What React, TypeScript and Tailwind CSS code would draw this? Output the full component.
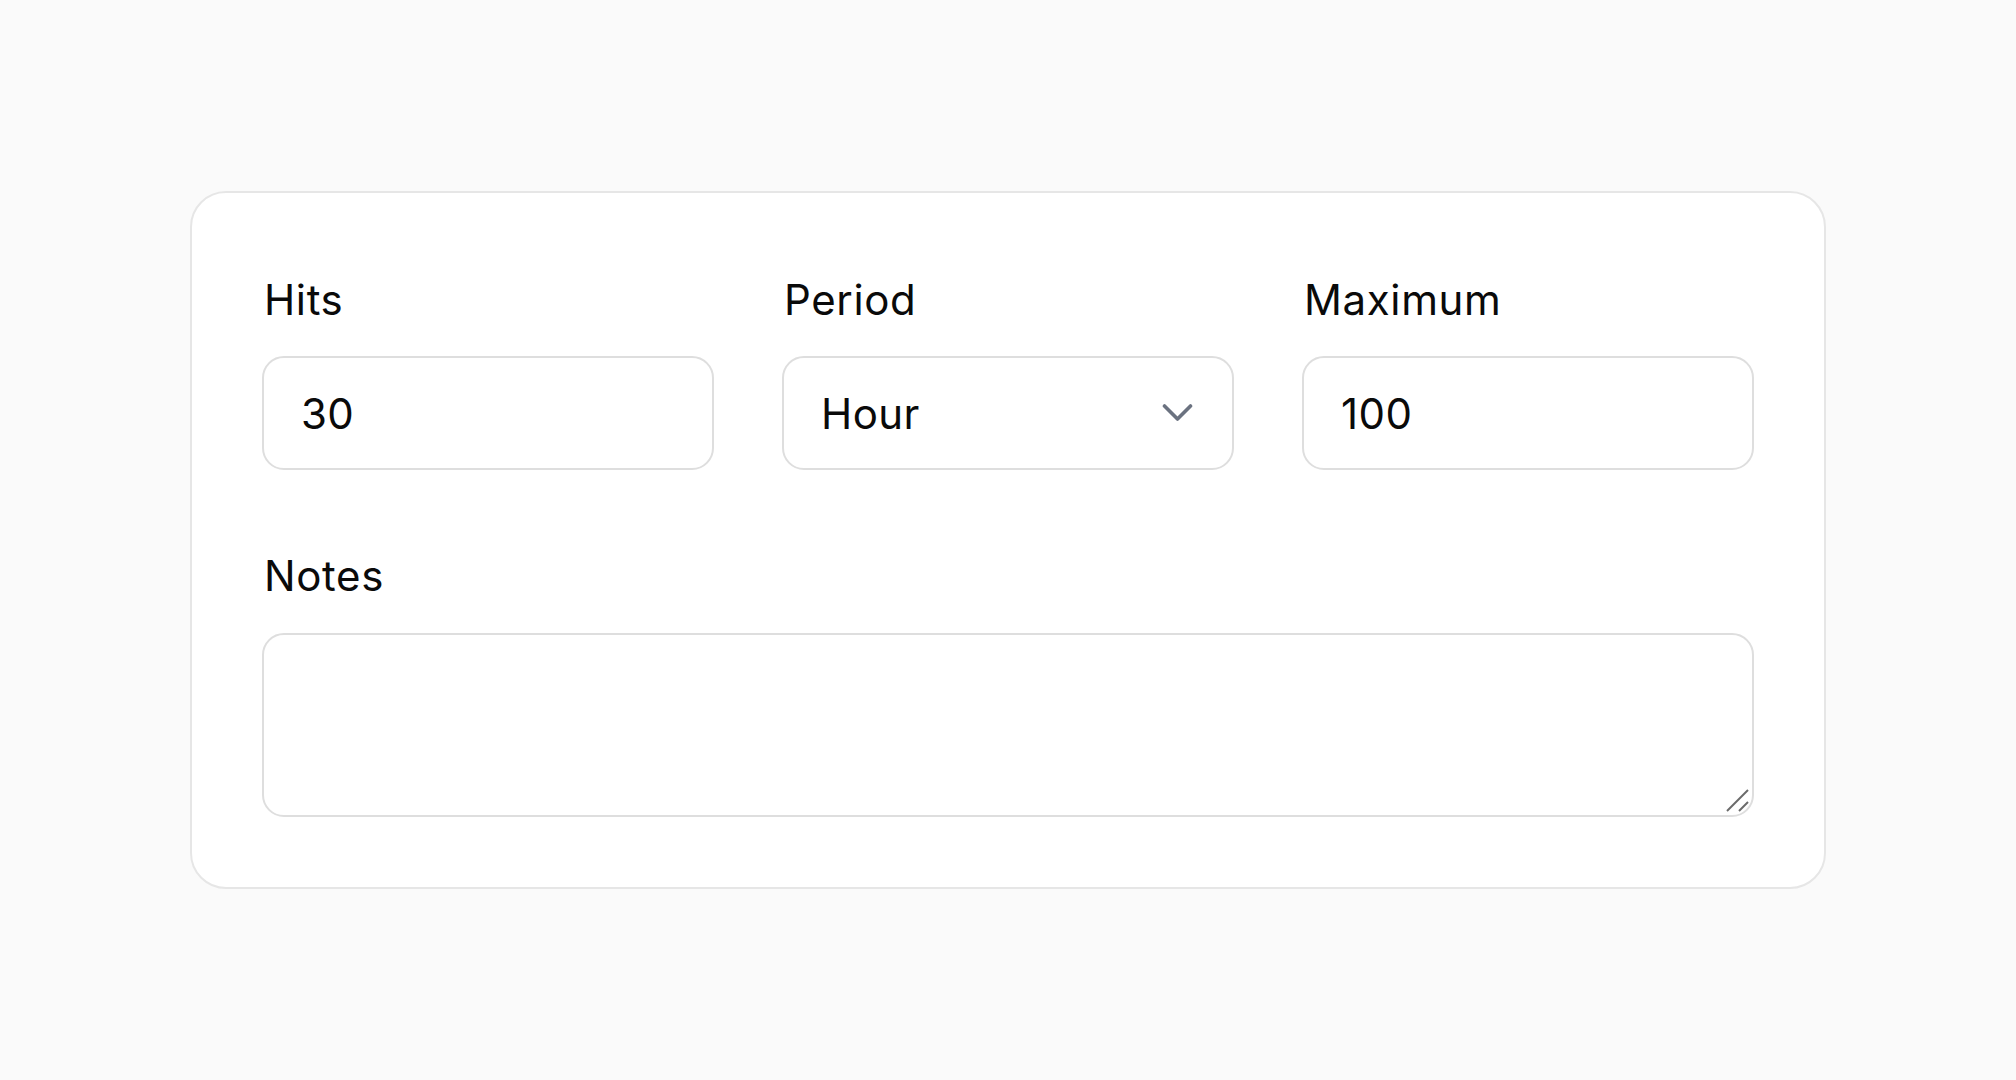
import React, { useState } from 'react';

const font = { fontFamily: 'Inter, "Noto Sans", sans-serif' };

function Label({ children }: { children: React.ReactNode }) {
  return <label className="block text-[42px] leading-[63px] text-[#0a0a0a] tracking-[0.015em] pl-[2px]">{children}</label>;
}

export default function App() {
  const [hits, setHits] = useState('30');
  const [period, setPeriod] = useState('Hour');
  const [max, setMax] = useState('100');
  const [notes, setNotes] = useState('');

  const inputCls =
    'w-full h-[114px] rounded-[22px] border-2 border-[#dedede] bg-white px-[37px] text-[42px] text-[#0a0a0a] tracking-[0.01em] outline-none';

  return (
    <div className="min-h-screen bg-[#fafafa] flex items-center justify-center" style={font}>
      <div className="w-[1636px] bg-white border-2 border-[#e6e6e6] rounded-[36px] px-[70px] pt-[75px] pb-[70px]">
        <div className="grid grid-cols-3 gap-x-[68px]">
          <div>
            <Label>Hits</Label>
            <div className="mt-[25px]">
              <input className={inputCls} value={hits} onChange={e => setHits(e.target.value)} />
            </div>
          </div>
          <div>
            <Label>Period</Label>
            <div className="mt-[25px] relative">
              <select
                className={inputCls + ' appearance-none'}
                value={period}
                onChange={e => setPeriod(e.target.value)}
              >
                <option>Minute</option>
                <option>Hour</option>
                <option>Day</option>
              </select>
              <svg
                className="absolute right-[41px] top-1/2 -translate-y-1/2 pointer-events-none"
                width="31"
                height="19"
                viewBox="0 0 31 19"
                fill="none"
              >
                <path d="M2.5 2.5 L15.5 15.5 L28.5 2.5" stroke="#6b7280" strokeWidth="3.6" strokeLinecap="round" strokeLinejoin="round" />
              </svg>
            </div>
          </div>
          <div>
            <Label>Maximum</Label>
            <div className="mt-[25px]">
              <input className={inputCls} value={max} onChange={e => setMax(e.target.value)} />
            </div>
          </div>
        </div>

        <div className="mt-[74px]">
          <Label>Notes</Label>
          <div className="mt-[26px] relative flex">
            <textarea
              className="w-full h-[184px] resize-none rounded-[22px] border-2 border-[#dedede] bg-white px-[37px] py-[24px] text-[42px] text-[#0a0a0a] outline-none"
              value={notes}
              onChange={e => setNotes(e.target.value)}
            />
            {/* resize grip */}
            <svg
              className="absolute right-[4px] bottom-[4px] pointer-events-none"
              width="24"
              height="24"
              viewBox="0 0 24 24"
              fill="none"
            >
              <path d="M1 22 L22 1" stroke="#6a6a6a" strokeWidth="2" />
              <path d="M13 22 L22 13" stroke="#6a6a6a" strokeWidth="2" />
            </svg>
          </div>
        </div>
      </div>
    </div>
  );
}
